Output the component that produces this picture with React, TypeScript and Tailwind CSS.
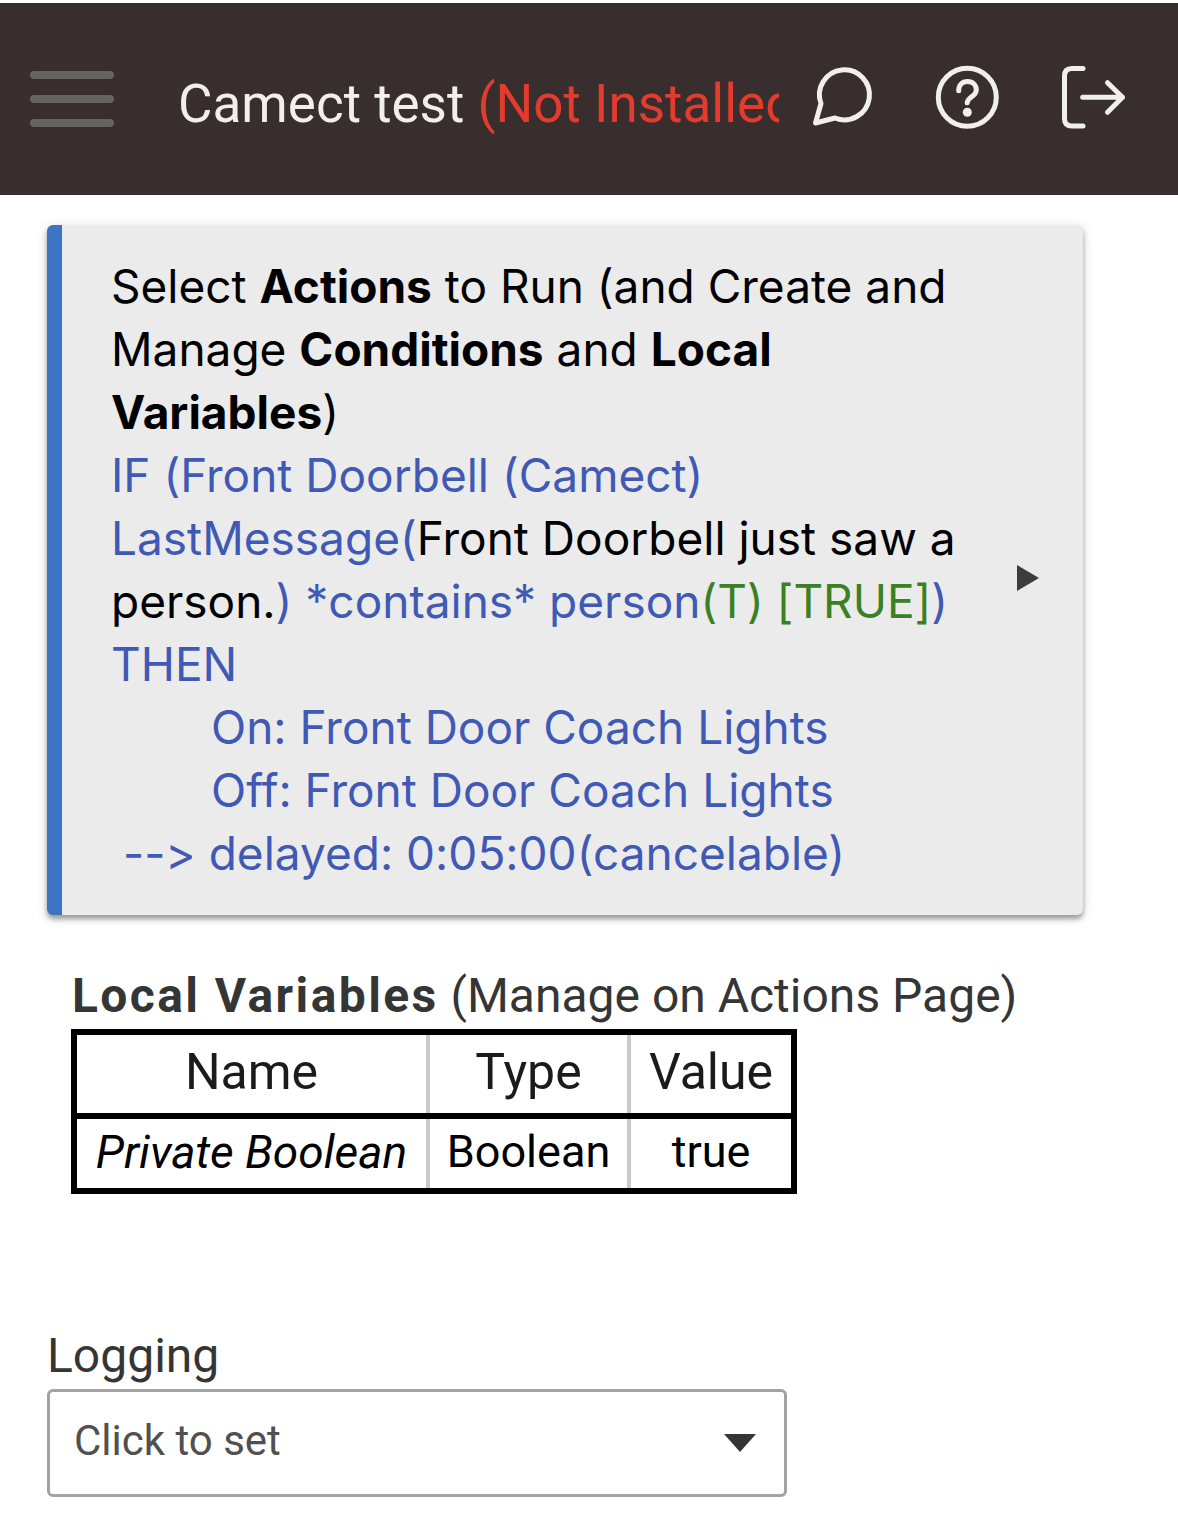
import { useState } from "react";

const variables = [{ name: "Private Boolean", type: "Boolean", value: "true" }];

const loggingOptions = ["Events", "Triggers", "Actions"];

const iconProps = {
  height: 64,
  fill: "none",
  stroke: "currentColor",
  strokeWidth: 5,
  strokeLinecap: "round" as const,
  strokeLinejoin: "round" as const,
  "aria-hidden": true,
};

function ChatIcon() {
  return (
    <svg {...iconProps} width={64} viewBox="0 0 64 64">
      <path d="M4.5 58 10 38.5A25 25 0 1 1 24 53Z" />
    </svg>
  );
}

function HelpIcon() {
  return (
    <svg {...iconProps} width={64} viewBox="0 0 64 64">
      <circle cx="32.3" cy="32.3" r="29" />
      <path d="M23.7 25.7C23.7 20 27.3 16.5 32.5 16.5C37.9 16.5 41.3 20.2 41.3 25C41.3 31.6 32.5 31.8 32.2 37.8" />
      <circle cx="32.3" cy="47.3" r="4.5" fill="currentColor" stroke="none" />
    </svg>
  );
}

function LogoutIcon() {
  return (
    <svg {...iconProps} width={68} viewBox="0 0 68 64">
      <path d="M24 3.5H13Q5.5 3.5 5.5 11V53.5Q5.5 61 13 61H24" />
      <path d="M23.7 32.3H63.5M48.5 17.7 63.5 32.3 48.5 47.3" />
    </svg>
  );
}

function Header() {
  return (
    <header className="mt-[3px] flex h-48 items-center bg-[#372e2d] pl-[30px] pr-[51px]">
      <button type="button" aria-label="Menu" className="flex w-[84px] shrink-0 flex-col gap-4">
        <span className="h-2 w-full rounded-full bg-[#656363]" />
        <span className="h-2 w-full rounded-full bg-[#656363]" />
        <span className="h-2 w-full rounded-full bg-[#656363]" />
      </button>

      <h1 className="ml-16 mr-8 min-w-0 flex-1 overflow-hidden whitespace-nowrap pt-2.5 text-[53px] leading-[64px] text-[#f1efee]">
        Camect test <span className="text-[#e33b2e]">(Not Installed)</span>
      </h1>

      <nav className="flex shrink-0 gap-[60px] pb-1 text-[#f1efee]">
        <a href="#community" aria-label="Community"><ChatIcon /></a>
        <a href="#help" aria-label="Help"><HelpIcon /></a>
        <a href="#logout" aria-label="Log out"><LogoutIcon /></a>
      </nav>
    </header>
  );
}

function ActionsCard() {
  return (
    <button
      type="button"
      className="flex w-full items-center rounded-md border-l-[15px] border-[#3b74c1] bg-[#ebebeb] py-[30px] pl-[49px] pr-[43px] text-left font-['Inter',sans-serif] text-[46px] leading-[63px] text-black shadow-[0_4px_5px_rgba(0,0,0,0.35),0_2px_14px_rgba(0,0,0,0.12)] [font-variant-ligatures:none]"
    >
      <span className="min-w-0 flex-1">
        Select <b>Actions</b> to Run (and Create and Manage <b>Conditions</b> and <b>Local Variables</b>)
        <span className="block text-[#3f59b5]">
          IF (Front Doorbell (Camect) LastMessage(<span className="text-black">Front Doorbell just saw a person.</span>)
          *contains* person<span className="text-[#3a8024]">(T) [TRUE]</span>) THEN
        </span>
        <span className="block pl-[100px] text-[#3f59b5]">On: Front Door Coach Lights</span>
        <span className="block pl-[100px] text-[#3f59b5]">Off: Front Door Coach Lights</span>
        <span className="block pl-3 text-[#3f59b5]">--&gt; delayed: 0:05:00(cancelable)</span>
      </span>
      <svg width="24" height="26" viewBox="0 0 24 26" className="ml-4 mt-4 shrink-0" aria-hidden="true">
        <path d="M1 0 23 13 1 26Z" fill="#3a3d40" />
      </svg>
    </button>
  );
}

function LocalVariables() {
  return (
    <section className="mt-12 pl-6">
      <h2 className="pl-px text-[48px] leading-[66px] text-[#353535]">
        <b className="font-bold tracking-wider">Local Variables</b> (Manage on Actions Page)
      </h2>
      <table className="border-collapse border-[6px] border-black text-center">
        <thead>
          <tr className="h-[84px] border-b-[6px] border-black text-[50px] leading-[64px] text-[#1b1b1b]">
            <th className="w-[354px] border-r-4 border-r-[#cacaca] p-0 pb-1 font-normal">Name</th>
            <th className="w-[201px] border-r-4 border-r-[#cacaca] p-0 pb-1 font-normal">Type</th>
            <th className="w-[165px] p-0 pb-1 font-normal">Value</th>
          </tr>
        </thead>
        <tbody>
          {variables.map((v) => (
            <tr key={v.name} className="h-[75px] text-[45px] leading-[60px] text-black">
              <td className="border-r-4 border-r-[#cacaca] p-0 pb-1 text-[46px] italic">{v.name}</td>
              <td className="border-r-4 border-r-[#cacaca] p-0 pb-1">{v.type}</td>
              <td className="p-0 pb-1">{v.value}</td>
            </tr>
          ))}
        </tbody>
      </table>
    </section>
  );
}

function LoggingSelect() {
  const [value, setValue] = useState("");

  return (
    <div className="mt-[129px]">
      <label htmlFor="logging" className="block text-[48px] leading-[66px] text-[#353535]">
        Logging
      </label>
      <div className="relative w-full max-w-[740px]">
        <select
          id="logging"
          value={value}
          onChange={(e) => setValue(e.target.value)}
          className="block h-[108px] w-full appearance-none rounded-md border-[3px] border-[#a3a3a3] bg-white pb-1.5 pl-6 pr-20 text-[42px] text-[#505050]"
        >
          <option value="">Click to set</option>
          {loggingOptions.map((o) => (
            <option key={o} value={o}>{o}</option>
          ))}
        </select>
        <svg width="32" height="18" viewBox="0 0 32 18" className="pointer-events-none absolute right-[31px] top-[45px]" aria-hidden="true">
          <path d="M0 0H32L16 18Z" fill="#353535" />
        </svg>
      </div>
    </div>
  );
}

export default function App() {
  return (
    <div className="min-h-screen bg-white font-['Roboto',sans-serif]">
      <Header />
      <main className="pb-10 pl-[47px] pr-[95px] pt-[30px]">
        <ActionsCard />
        <LocalVariables />
        <LoggingSelect />
      </main>
    </div>
  );
}
